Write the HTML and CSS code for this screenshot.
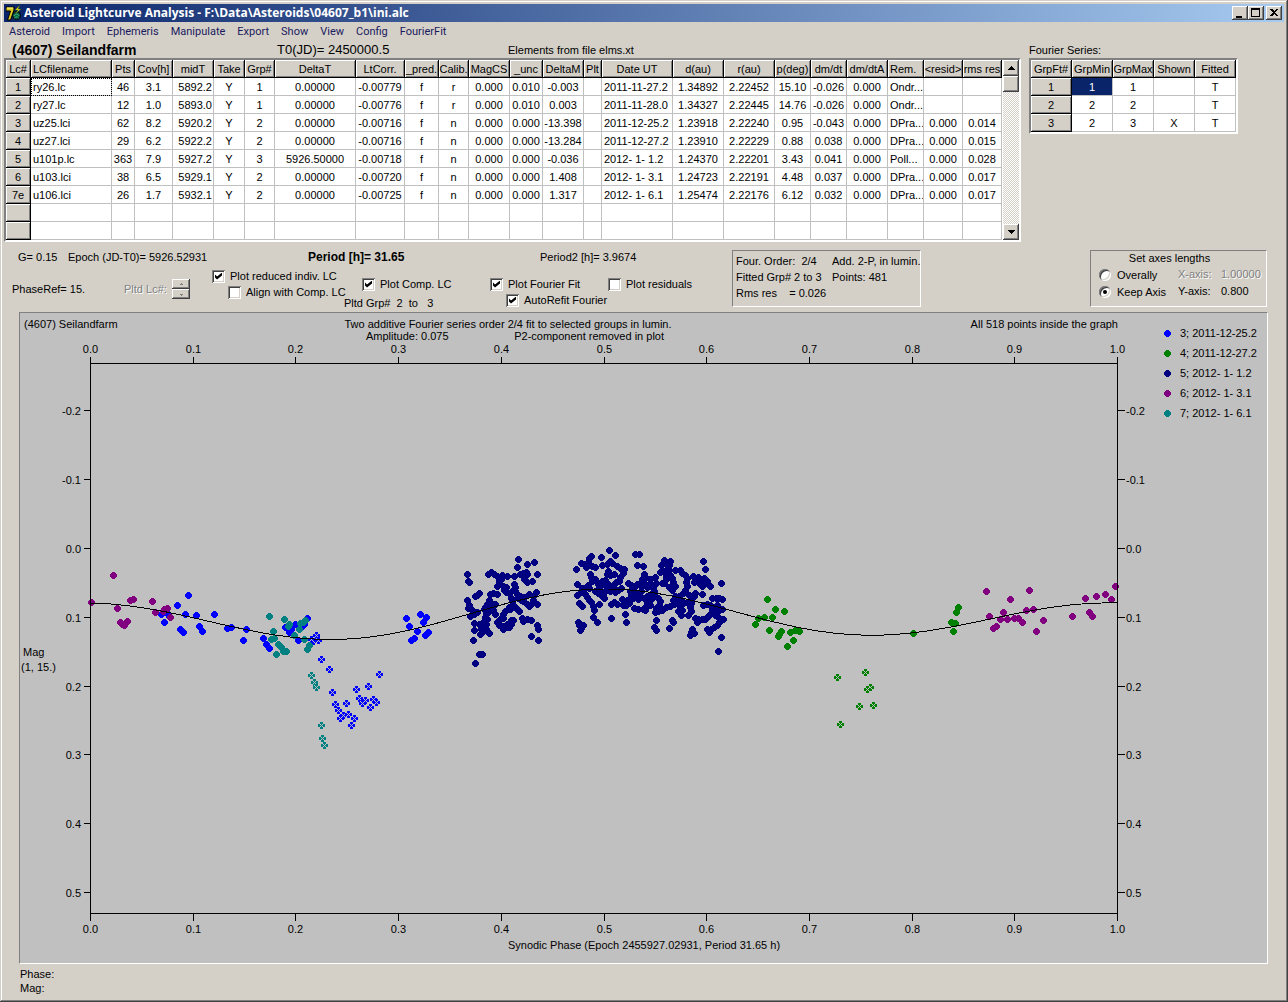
FILE: index.html
```html
<!DOCTYPE html>
<html lang="en">
<head>
  <meta charset="UTF-8" />
  <meta name="viewport" content="width=device-width, initial-scale=1.0" />
  <title>Asteroid Lightcurve Analysis</title>
  <link rel="stylesheet" href="styles.css">
</head>
<body>
<div class="window">
  <header class="titlebar">
    <svg class="app-icon" viewBox="0 0 16 16" aria-hidden="true">
      <path d="M0 2h8v3L4.500 15H1.500L4.500 6H0z" fill="#d8c820" stroke="#000"/>
      <path d="M1 3h6" stroke="#fffb90"/>
      <circle cx="10.500" cy="10.500" r="4" fill="#0a5a50" stroke="#000"/>
      <path d="M8 11c2-3 4-2 5 0M8.500 13c2-2 3-1 4 0" stroke="#40d070" fill="none"/>
      <path d="M14 0l-5 5h3l-3 4 6-5h-3z" fill="#ffee20" stroke="#205010" stroke-width=".5"/>
    </svg>
    <h1>Asteroid Lightcurve Analysis - F:\Data\Asteroids\04607_b1\ini.alc</h1>
    <button class="win-btn" aria-label="Minimize"><svg viewBox="0 0 12 10"><path d="M2 8h6v2H2z"/></svg></button>
    <button class="win-btn" aria-label="Maximize"><svg viewBox="0 0 12 10"><path d="M1 0h9v9H1zM2 2v6h7V2z" fill-rule="evenodd"/></svg></button>
    <button class="win-btn close" aria-label="Close"><svg viewBox="0 0 12 10"><path d="M2 1h2l2 2 2-2h2L7 4.500 10 8H8L6 6 4 8H2l3-3.500z"/></svg></button>
  </header>

  <nav class="menu">
    <a href="#asteroid">Asteroid</a>
    <a href="#import">Import</a>
    <a href="#ephemeris">Ephemeris</a>
    <a href="#manipulate">Manipulate</a>
    <a href="#export">Export</a>
    <a href="#show">Show</a>
    <a href="#view">View</a>
    <a href="#config">Config</a>
    <a href="#fourierfit">FourierFit</a>
  </nav>

  <section class="tables">
    <div class="lightcurves">
      <div class="info">
        <h2>(4607) Seilandfarm</h2>
        <span class="epoch">T0(JD)= 2450000.5</span>
        <span>Elements from file elms.xt</span>
      </div>
      <div class="sunken grid-box">
        <table id="lc-table"></table>
        <div class="scrollbar">
          <button aria-label="Scroll up"><svg viewBox="0 0 7 4"><path d="M3 0h1v1h1v1h1v1h1v1H0V3h1V2h1V1h1z"/></svg></button>
          <div class="thumb"></div>
          <button class="down" aria-label="Scroll down"><svg viewBox="0 0 7 4"><path d="M0 0h7v1H6v1H5v1H4v1H3V3H2V2H1V1H0z"/></svg></button>
        </div>
      </div>
    </div>
    <div class="fourier">
      <div class="info"><span>Fourier Series:</span></div>
      <div class="sunken"><table id="fourier-table"></table></div>
    </div>
  </section>

  <section class="controls">
    <div class="settings">
      <div class="values">
        <span class="g">G= 0.15</span>
        <span class="jd">Epoch (JD-T0)= 5926.52931</span>
        <strong>Period [h]= 31.65</strong>
        <span>Period2 [h]= 3.9674</span>
      </div>
      <div class="options">
        <div class="phase-ref">
          <span class="ref">PhaseRef= 15.</span>
          <span class="off lc">Pltd Lc#:</span>
          <div class="spinner">
            <button disabled aria-label="Next lightcurve"><svg viewBox="0 0 5 3"><path d="M2 0h1v1h1v1H1V1h1z"/></svg></button>
            <button disabled aria-label="Previous lightcurve"><svg viewBox="0 0 5 3"><path d="M1 1h3v1H3v1H2V2H1z"/></svg></button>
          </div>
        </div>
        <div class="opt indiv">
          <label><input type="checkbox" checked>Plot reduced indiv. LC</label>
          <label class="indent"><input type="checkbox">Align with Comp. LC</label>
        </div>
        <div class="opt lower comp">
          <label><input type="checkbox" checked>Plot Comp. LC</label>
          <p>Pltd Grp#&nbsp; 2 &nbsp;to &nbsp; 3</p>
        </div>
        <div class="opt lower fit">
          <label><input type="checkbox" checked>Plot Fourier Fit</label>
          <label class="indent"><input type="checkbox" checked>AutoRefit Fourier</label>
        </div>
        <div class="opt lower">
          <label><input type="checkbox">Plot residuals</label>
        </div>
      </div>
    </div>
    <div class="panel fit-info">
      <span>Four. Order:&nbsp; 2/4</span><span>Add. 2-P, in lumin.</span>
      <span>Fitted Grp# 2 to 3</span><span>Points: 481</span>
      <span>Rms res &nbsp;&nbsp; = 0.026</span>
    </div>
    <div class="panel axes">
      <h3>Set axes lengths</h3>
      <div class="axes-grid">
        <label><input type="radio" name="axes">Overally</label><span class="off">X-axis:</span><span class="off">1.00000</span>
        <label><input type="radio" name="axes" checked>Keep Axis</label><span>Y-axis:</span><span>0.800</span>
      </div>
    </div>
  </section>

  <main class="chart">
    <svg id="plot" viewBox="20 314 1247 650" role="img" aria-label="Composite lightcurve"></svg>
  </main>

  <footer>
    <p>Phase:</p>
    <p>Mag:</p>
  </footer>
</div>
<script src="script.js"></script>
</body>
</html>
```
FILE: styles.css
```css
:root{--face:#d4d0c8;--shade:#808080;--dark:#404040;--light:#fff;--plot:#c0c0c0;--text:#000;}
*{box-sizing:border-box;margin:0;padding:0}
body{font-family:'Liberation Sans',Arial,sans-serif;font-size:11px;line-height:16px;background:var(--face);color:var(--text);}
button{font:inherit;background:var(--face);border:0;box-shadow:inset -1px -1px var(--dark),inset 1px 1px var(--light),inset -2px -2px var(--shade);}
.window{display:flex;flex-direction:column;min-height:100vh;padding:4px;box-shadow:inset -1px -1px var(--dark),inset 1px 1px var(--face),inset -2px -2px var(--shade),inset 2px 2px var(--light);white-space:nowrap;}

/* title bar and menu */
.titlebar{display:flex;align-items:center;height:18px;padding:0 2px;background:linear-gradient(90deg,#0a246a,#a6caf0);}
.app-icon{width:16px;height:16px}
.titlebar h1{flex:1;padding-left:2px;font:bold 12px/18px 'Open Sans',Tahoma,sans-serif;color:#fff;}
.win-btn{width:16px;height:14px;padding:2px}
.win-btn svg{display:block;width:12px;height:10px}
.win-btn.close{margin-left:2px}
svg{shape-rendering:crispEdges}
.app-icon{shape-rendering:auto}
.menu{display:flex;gap:12px;height:20px;padding-left:5px;font:11px/20px Roboto,Tahoma,sans-serif;}
.menu a{color:#1a1a5e;text-decoration:none}

/* tables */
.tables{display:flex;gap:8px}
.info{display:flex;align-items:center;height:16px}
.lightcurves .info{padding-left:8px}
.info h2{width:265px;font-size:14px}
.info .epoch{width:231px;font-size:13px}
.sunken{width:max-content;border:2px solid;border-color:var(--shade) var(--light) var(--light) var(--shade);background:#fff}
.grid-box{display:flex;gap:1px}
table{table-layout:fixed;border-collapse:separate;border-spacing:0}
th,td{height:18px;padding-top:1px;overflow:hidden;border-right:1px solid var(--plot);border-bottom:1px solid var(--plot);font-weight:normal;line-height:16px;text-align:center;}
th{background:var(--face);border-color:#000;box-shadow:inset 1px 1px var(--light),inset -1px -1px var(--shade);}
.left{text-align:left;padding-left:2px}
.right{text-align:right;padding-right:1px}
.focus{outline:1px dotted #000;outline-offset:-1px}
.selected{background:#0a246a;color:#fff}
.scrollbar{display:flex;flex-direction:column;width:16px;background:repeating-conic-gradient(#fff 0 25%,var(--face) 0 50%) 0 0/2px 2px;}
.scrollbar button{height:16px}
.scrollbar svg{display:block;width:7px;height:4px;margin:0 auto}
.scrollbar .down{margin-top:auto}
.thumb{height:16px;background:var(--face);box-shadow:inset -1px -1px var(--dark),inset 1px 1px var(--light),inset -2px -2px var(--shade)}

/* controls */
.controls{display:flex;align-items:flex-start;padding:8px 17px 2px 8px}
.settings{width:720px}
.values{display:flex;height:18px;line-height:14px;padding-left:6px}
.values .g{width:50px}
.values .jd{width:240px}
.values strong{width:232px;font-size:12px}
.options{display:flex;height:42px}
.phase-ref{display:flex;align-items:center;width:200px}
.ref{width:112px}
.lc{width:48px}
.off{color:var(--shade);text-shadow:1px 1px #fff}
.spinner{display:flex;flex-direction:column;width:18px}
.spinner button{height:10px}
.spinner svg{display:block;width:5px;height:3px;margin:0 auto;fill:var(--shade)}
.opt label,.axes label{display:flex;align-items:center;gap:5px}
.lower{padding-top:8px}
.opt .indent{padding-left:16px}
.opt.indiv{width:132px}
.opt.comp{width:146px}
.comp label{padding-left:18px}
.comp p{margin-top:3px}
.opt.fit{width:118px}
input{appearance:none;flex:none;display:grid;place-items:center;width:13px;height:13px;background:#fff;box-shadow:inset 1px 1px var(--shade),inset -1px -1px var(--light),inset 2px 2px var(--dark),inset -2px -2px var(--face);}
input[type=checkbox]:checked::after{content:'';width:7px;height:7px;background:#000;clip-path:polygon(0 29%,29% 57%,100% 0,100% 43%,29% 100%,0 71%)}
input[type=radio]{width:12px;height:12px;border-radius:50%}
.axes label{gap:6px}
input[type=radio]:checked::after{content:'';width:4px;height:4px;border-radius:50%;background:#000}
.panel{height:57px;border:1px solid;border-color:var(--shade) var(--light) var(--light) var(--shade)}
.fit-info{display:grid;grid-template-columns:96px auto;grid-auto-rows:16px;width:189px;padding:2px 0 0 3px}
.axes{width:177px;margin-left:auto}
.axes h3{font-size:11px;font-weight:normal;line-height:15px;padding-right:18px;text-align:center}
.axes-grid{display:grid;grid-template-columns:79px 43px auto;grid-auto-rows:17px;padding-left:8px}

/* plot */
.chart{margin:0 16px 0 15px;border:1px solid;border-color:var(--shade) var(--light) var(--light) var(--shade);background:var(--plot)}
#plot{display:block;width:100%;height:auto;font-size:11px}
#plot .axis{fill:none;stroke:#000}
#plot .curve{fill:none;stroke:#000;stroke-linejoin:round}
footer{padding:3px 16px 0;line-height:14px}
```
FILE: script.js
```js
/**** 1. TABLES ****/
// [title, width, alignment]
const lcCols=[['Lc#',25],['LCfilename',81,'left'],['Pts',23],['Cov[h]',38],['midT',41,'right'],['Take',31],['Grp#',30],['DeltaT',81],['LtCorr.',49],['_pred.',34],['Calib.',30],['MagCS',41],['_unc',33],['DeltaM',41],['Plt',18],['Date UT',71,'left'],['d(au)',51],['r(au)',51],['p(deg)',36],['dm/dt',36],['dm/dtA',41],['Rem.',36,'left'],['<resid>',39],['rms res',39]];
const lcRows=[
  '1|ry26.lc|46|3.1|5892.2|Y|1|0.00000|-0.00779|f|r|0.000|0.010|-0.003||2011-11-27.2|1.34892|2.22452|15.10|-0.026|0.000|Ondr...||',
  '2|ry27.lc|12|1.0|5893.0|Y|1|0.00000|-0.00776|f|r|0.000|0.010|0.003||2011-11-28.0|1.34327|2.22445|14.76|-0.026|0.000|Ondr...||',
  '3|uz25.lci|62|8.2|5920.2|Y|2|0.00000|-0.00716|f|n|0.000|0.000|-13.398||2011-12-25.2|1.23918|2.22240|0.95|-0.043|0.000|DPra...|0.000|0.014',
  '4|uz27.lci|29|6.2|5922.2|Y|2|0.00000|-0.00716|f|n|0.000|0.000|-13.284||2011-12-27.2|1.23910|2.22229|0.88|0.038|0.000|DPra...|0.000|0.015',
  '5|u101p.lc|363|7.9|5927.2|Y|3|5926.50000|-0.00718|f|n|0.000|0.000|-0.036||2012- 1- 1.2|1.24370|2.22201|3.43|0.041|0.000|Poll...|0.000|0.028',
  '6|u103.lci|38|6.5|5929.1|Y|2|0.00000|-0.00720|f|n|0.000|0.000|1.408||2012- 1- 3.1|1.24723|2.22191|4.48|0.037|0.000|DPra...|0.000|0.017',
  '7e|u106.lci|26|1.7|5932.1|Y|2|0.00000|-0.00725|f|n|0.000|0.000|1.317||2012- 1- 6.1|1.25474|2.22176|6.12|0.032|0.000|DPra...|0.000|0.017',
  '|||||||||||||||||||||||',
  '|||||||||||||||||||||||'
];
const fourierCols=[['GrpFt#',41],['GrpMin',41],['GrpMax',41],['Shown',41],['Fitted',41]];
const fourierRows=['1|1|1||T','2|2|2||T','3|2|3|X|T'];

const centredHeads=['midT','Date UT'];
function cell(tag,text,cls){const c=document.createElement(tag);c.textContent=text;if(cls)c.className=cls;return c;}
function fillTable(id,cols,rows){
  const table=document.getElementById(id);
  table.style.width=cols.reduce((s,c)=>s+c[1],0)+'px';
  const head=table.createTHead().insertRow();
  cols.forEach(([title,w,align])=>{const th=cell('th',title,centredHeads.includes(title)?'':align);th.style.width=w+'px';head.appendChild(th);});
  const body=table.createTBody();
  rows.forEach(r=>{const tr=body.insertRow();r.split('|').forEach((v,i)=>tr.appendChild(cell(i?'td':'th',v,cols[i][2])));});
  return body;
}
fillTable('lc-table',lcCols,lcRows).rows[0].cells[1].classList.add('focus');
fillTable('fourier-table',fourierCols,fourierRows).rows[0].cells[1].classList.add('selected');

/**** 2. PLOT HELPERS ****/
const plot=document.getElementById('plot');
function add(tag,attrs,text){const e=document.createElementNS('http://www.w3.org/2000/svg',tag);for(const k in attrs)e.setAttribute(k,attrs[k]);if(text)e.textContent=text;plot.appendChild(e);}
function label(x,y,text,anchor='start'){add('text',{x,y,'text-anchor':anchor},text);}
const left=90.5,right=1117.5,top_=364.5,bottom=914.5;
const px=phase=>left+(right-left)*phase;
const py=mag=>549.5+688*mag;

/**** 3. OBSERVATIONS ****/
// each block is [x0, y0, 'x,y ...'], steps are a third of a plot unit
const series=[
  {name:'3; 2011-12-25.2',color:'#0000ff',
   dots:[[70,560,'355,109 322,139 346,166 379,169 433,166 274,166 283,190 331,211 340,220 388,202 397,217 472,208 484,205 529,211 520,244 580,238 589,256 597,268 299,172 290,160'],
         [250,560,'106,205 118,220 136,196 125,212 145,244 172,178 163,196 157,202 469,178 478,202 511,166 529,175 520,190 502,217 535,220 526,230 493,238 484,244']],
   out:[[250,560,'199,229 190,247 205,244 184,241 214,301 238,331 388,346 355,382 319,391 247,400 328,417 346,424 337,433 370,421 379,430 361,445 289,433 256,436 265,454 280,468 295,466 271,478 313,478 304,499']]},
  {name:'4; 2011-12-27.2',color:'#008000',
   dots:[[730,580,'112,61 136,91 163,97 85,118 103,115 127,115 76,136 118,154 154,157 145,172 181,160 197,154 208,157 190,184 172,202 149,166 550,163 685,85 679,100 664,130 676,133 670,157']],
   out:[[730,580,'406,280 322,295 421,325 412,331 388,382 430,379 331,436']]},
  {name:'5; 2012- 1- 1.2',color:'#000080',
   dots:[[450,540,'52,106 55,126 58,130 205,61 202,85 232,76 253,70 262,106 115,106 124,100 133,106 142,113 157,109 172,112 193,112 211,106 220,103 229,100 232,106 223,121 232,130 247,127 82,169 76,173 88,163 52,184 58,199 55,208 64,211 70,217 82,220 61,232 73,226 121,166 130,163 142,166 142,142 151,136 154,121 148,127 160,142 169,145 193,136 196,145 190,154 163,154 169,160 178,163 196,157 202,166 205,178 214,184 211,172 223,175 238,166 250,172 259,160 220,187 232,196 238,202 250,184 247,193 262,196 184,178 187,187 193,202 178,205 181,211 199,208 208,217 166,217 160,226 160,238 118,184 124,193 112,196 106,205 103,211 118,205 130,202 136,196 118,217 130,214 136,226 109,226 106,235 112,241 100,250 73,253 88,256 97,262 109,256 73,274 91,286 100,277 109,271 118,283 70,304 88,346 97,346 76,373 142,250 151,241 148,259 160,262 160,271 172,256 178,265 184,256 190,244 184,244 169,265 217,238 220,247 232,241 244,244 262,259 265,271 244,292 265,304 106,265 94,271'],
         [565,540,'133,34 151,49 109,55 79,52 73,58 49,73 34,91 61,76 70,70 64,85 82,82 91,85 112,79 127,76 136,67 142,73 157,82 166,88 178,91 175,103 130,97 127,106 136,109 148,106 166,115 76,106 79,115 91,121 82,127 37,136 37,169 49,160 61,148 70,139 52,148 73,148 100,136 112,127 121,124 118,136 127,133 103,145 91,157 100,163 112,160 121,157 130,148 115,172 118,178 109,169 136,157 145,148 145,139 154,130 163,127 160,154 151,160 169,148 61,166 67,175 73,184 79,190 43,193 52,202 85,202 88,214 103,196 85,235 97,250 40,250 43,259 55,259 49,268 46,274 139,196 148,190 157,196 139,238 172,181 178,190 187,184 184,199 175,199 193,193 181,226 184,250'],
         [565,540,'211,46 223,46 217,79 235,82 238,106 241,115 256,121 271,115 190,133 199,139 208,145 217,136 229,130 232,121 229,142 241,136 247,145 256,133 262,139 265,148 274,133 292,133 196,157 199,169 205,178 211,163 223,169 220,181 229,157 238,178 247,172 259,166 250,184 259,181 247,193 241,205 256,199 241,214 235,211 208,208 220,211 268,157 271,172 280,178 286,187 283,199 274,208 271,220 280,217 292,214 274,244 268,265 274,274 298,64 295,73 289,79 304,76 316,67 313,79 310,91 298,97 286,100 304,121 310,100 316,109 322,118 325,130 331,142 322,154 313,145 298,133 304,112 331,94 346,94 352,103 361,109 367,118 364,130 367,142 361,154 355,163 343,172 331,172 349,184 337,187 325,184 328,196 316,202 304,205 322,244 325,250 313,268 340,196 346,205 352,214 340,217 349,229 355,193 367,190 379,181 379,193 376,205 379,217 370,229 388,172 373,169 337,178'],
         [565,540,'391,163 412,166 415,67 421,91 385,112 394,121 400,115 388,130 403,133 412,142 418,118 418,130 427,127 436,142 430,136 415,127 469,133 442,178 454,178 463,178 472,181 415,199 427,196 436,199 445,205 457,199 463,208 472,211 442,214 436,226 427,235 421,241 412,241 400,241 391,238 397,250 451,229 460,235 457,220 469,241 475,241 463,250 457,259 448,265 439,271 427,271 433,280 382,271 379,280 388,283 376,289 469,295 460,337']],
   out:[]},
  {name:'6; 2012- 1- 3.1',color:'#800080',
   dots:[[70,560,'130,49 64,130 142,148 181,124 190,121 151,190 163,200 157,196 172,187 247,127 256,160 280,157 283,151 292,148 301,175'],
         [960,570,'79,67 208,64 151,91 466,52 436,76 409,82 376,88 454,91 88,142 130,130 199,124 220,121 121,151 142,151 163,148 175,148 187,160 109,172 100,178 250,154 337,142 388,130 397,142 229,187']],
   out:[]},
  {name:'7; 2012- 1- 6.1',color:'#008080',
   dots:[[250,560,'58,172 103,181 118,196 115,202 70,217 64,241 73,238 86,256 94,265 100,277 109,277 79,286 133,229 148,211 151,193 160,190 167,184 163,241 178,259 172,272']],
   out:[[250,560,'184,349 193,370 199,385 214,499 217,538 223,559']]}
];
function eachPoint(blocks,fn){blocks.forEach(([x0,y0,list])=>list.split(' ').forEach(p=>{const [x,y]=p.split(',').map(Number);fn(x0+Math.floor(x/3),y0+Math.floor(y/3));}));}
function dot(x,y,fill){add('path',{d:'M-1-3h3v1h1v1h1v3h-1v1h-1v1h-3v-1h-1v-1h-1v-3h1v-1h1z',transform:`translate(${x},${y})`,fill});}
function crossed(x,y,fill){
  add('path',{d:'M-1-3h3v2h2v3h-2v2h-3v-2h-2v-3h2z',transform:`translate(${x},${y})`,fill});
  add('path',{d:'M-2-2h1v1h-1zM-1-1h1v1h-1zM0 0h1v1h-1zM1 1h1v1h-1zM2 2h1v1h-1zM2-2h1v1h-1zM1-1h1v1h-1zM-1 1h1v1h-1zM-2 2h1v1h-1z',transform:`translate(${x},${y})`,fill:'#c0c0c0'});
}
series.forEach((s,i)=>{
  eachPoint(s.dots,(x,y)=>dot(x,y,s.color));
  eachPoint(s.out,(x,y)=>crossed(x,y,s.color));
  dot(1167,334+20*i,s.color);
  label(1180,338+20*i,s.name);
});

/**** 4. AXES AND FIT ****/
let frame=`M${left} ${top_}H${right}V${bottom}H${left}Z`;
for(let i=0;i<=10;i++){
  const x=Math.floor(px(i/10))+.5,t=(i/10).toFixed(1);
  frame+=`M${x} ${top_}v-7M${x} ${bottom}v7`;
  label(x,354,t,'middle');label(x,934,t,'middle');
}
for(let i=-2;i<=5;i++){
  const y=Math.floor(py(i/10))+.5,t=(i/10).toFixed(1);
  frame+=`M${left} ${y}h-7M${right} ${y}h7`;
  label(81,y+4,t,'end');label(1126,y+4,t);
}
add('path',{d:frame,class:'axis'});

const fit=p=>{const w=2*Math.PI*p;return 617.5+7*Math.cos(w)+2*Math.sin(w)-20.5*Math.cos(2*w)+.8*Math.sin(2*w);};
let curve='';
for(let i=0;i<=200;i++)curve+=`${i?'L':'M'}${px(i/200).toFixed(1)} ${fit(i/200).toFixed(1)}`;
add('path',{d:curve,class:'curve'});

label(24,329,'(4607) Seilandfarm');
label(508,329,'Two additive Fourier series order 2/4 fit to selected groups in lumin.','middle');
label(366,341,'Amplitude: 0.075');
label(664,341,'P2-component removed in plot','end');
label(1118,329,'All 518 points inside the graph','end');
label(644,950,'Synodic Phase (Epoch 2455927.02931, Period 31.65 h)','middle');
label(23,657,'Mag');
label(21,672,'(1, 15.)');
```
